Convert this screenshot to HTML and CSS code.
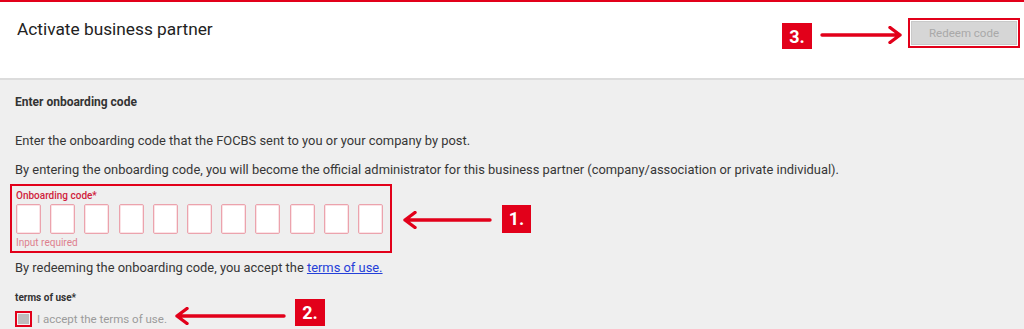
FILE: index.html
```html
<!DOCTYPE html>
<html lang="en">
<head>
    <meta charset="UTF-8">
    <title>Activate business partner</title>
    <link rel="stylesheet" href="styles.css">
</head>
<body>
    <div class="topline"></div>
    <header class="header">
        <h1>Activate business partner</h1>
        <div class="actions">
            <span class="badge badge-3">3.</span>
            <svg class="arrow arrow-right" width="83" height="18" viewBox="0 0 83 18">
                <path d="M2 9 H80 M70 1.5 L80 9 L70 16.5" fill="none" stroke="#e2001a" stroke-width="3.4" stroke-linecap="round" stroke-linejoin="round"/>
            </svg>
            <div class="mark btn-mark">
                <button class="redeem" disabled>Redeem code</button>
            </div>
        </div>
    </header>

    <main class="content">
        <h2>Enter onboarding code</h2>
        <p>Enter the onboarding code that the FOCBS sent to you or your company by post.</p>
        <p>By entering the onboarding code, you will become the official administrator for this business partner (company/association or private individual).</p>

        <div class="code-row">
            <div class="mark code-field">
                <label class="code-label">Onboarding code*</label>
                <div class="code-boxes">
                    <input class="code-box" maxlength="1">
                    <input class="code-box" maxlength="1">
                    <input class="code-box" maxlength="1">
                    <input class="code-box" maxlength="1">
                    <input class="code-box" maxlength="1">
                    <input class="code-box" maxlength="1">
                    <input class="code-box" maxlength="1">
                    <input class="code-box" maxlength="1">
                    <input class="code-box" maxlength="1">
                    <input class="code-box" maxlength="1">
                    <input class="code-box" maxlength="1">
                </div>
                <div class="code-error">Input required</div>
            </div>
            <svg class="arrow" width="90" height="18" viewBox="0 0 90 18">
                <path d="M88 9 H3 M13 1.5 L3 9 L13 16.5" fill="none" stroke="#e2001a" stroke-width="3.4" stroke-linecap="round" stroke-linejoin="round"/>
            </svg>
            <span class="badge badge-1">1.</span>
        </div>

        <p class="accept-text">By redeeming the onboarding code, you accept the <a href="#">terms of use.</a></p>

        <div class="terms-row">
            <div class="terms-col">
                <div class="terms-label">terms of use*</div>
                <label class="check-line">
                    <span class="checkbox"><span class="checkbox-inner"></span></span>
                    <span class="check-text">I accept the terms of use.</span>
                </label>
            </div>
            <svg class="arrow arrow-2" width="112" height="18" viewBox="0 0 112 18">
                <path d="M110 9 H3 M13 1.5 L3 9 L13 16.5" fill="none" stroke="#e2001a" stroke-width="3.4" stroke-linecap="round" stroke-linejoin="round"/>
            </svg>
            <span class="badge badge-2">2.</span>
        </div>
    </main>
</body>
</html>
```

FILE: styles.css
```css
body {
    margin: 0;
    background: #efefef;
    font-family: Roboto, "Liberation Sans", Arial, sans-serif;
    color: #363636;
    overflow: hidden;
}

.topline {
    height: 2px;
    background: #e2001a;
}

.header {
    height: 76px;
    background: #fff;
    border-bottom: 2px solid #dcdcdc;
    display: flex;
    justify-content: space-between;
    align-items: flex-start;
    padding: 0 4px 0 17px;
}

h1 {
    margin: 17px 0 0;
    font-size: 17.3px;
    line-height: 20px;
    font-weight: 400;
    color: #222;
}

.actions {
    display: flex;
    align-items: center;
    margin-top: 15px;
}

.badge {
    display: flex;
    align-items: center;
    justify-content: center;
    background: #e2001a;
    color: #fff;
    font-weight: 700;
    font-size: 18px;
    width: 30px;
    height: 26px;
}

.badge-3 {
    margin-top: 6px;
}

.arrow {
    display: block;
    flex: none;
}

.arrow-right {
    margin: 3px 5px 0 8px;
}

.mark {
    border: 2px solid #e2001a;
}

.btn-mark {
    width: 106px;
    height: 24px;
    padding: 1px;
}

.redeem {
    width: 100%;
    height: 100%;
    background: #d6d6d6;
    border: 1px solid #c9c9c9;
    color: #a9a9a9;
    font-family: Roboto, "Liberation Sans", Arial, sans-serif;
    font-size: 11.5px;
    padding: 0;
}

.content {
    padding: 0 15px;
}

h2 {
    margin: 14px 0 22px;
    font-size: 12px;
    line-height: 16px;
    font-weight: 700;
    color: #333;
}

p {
    margin: 0 0 11px;
    font-size: 12.9px;
    line-height: 18px;
}

.code-row {
    display: flex;
    align-items: center;
    margin: -6px 0 0 -5px;
}

.code-field {
    width: 374px;
    padding: 4px 0 2px 4px;
}

.code-label {
    display: block;
    font-size: 10px;
    line-height: 12px;
    font-weight: 500;
    color: #d0223c;
}

.code-boxes {
    display: flex;
    justify-content: space-between;
    width: 367px;
    margin: 2px 0 3px;
}

.code-box {
    width: 25px;
    height: 30px;
    box-sizing: border-box;
    border: 1px solid #eba3ad;
    border-radius: 2px;
    box-shadow: inset 0 0 0 1px #fbe3e6;
    background: #fff;
    padding: 0;
}

.code-error {
    font-size: 10px;
    line-height: 12px;
    color: #de7f8e;
}

.code-row .arrow {
    margin: 2px 10px 0 10px;
}

.badge-1 {
    width: 29px;
    height: 28px;
}

.accept-text {
    margin: 6px 0 0;
}

.accept-text a {
    color: #2440d8;
}

.terms-row {
    display: flex;
    align-items: flex-end;
    margin-top: 15px;
}

.terms-label {
    font-size: 10px;
    line-height: 12px;
    font-weight: 700;
    color: #333;
    margin-bottom: 7px;
}

.check-line {
    display: flex;
    align-items: center;
}

.checkbox {
    width: 17px;
    height: 16px;
    box-sizing: border-box;
    border: 2px solid #e2001a;
    padding: 1px;
    background: #f3f3f3;
}

.checkbox-inner {
    display: block;
    width: 100%;
    height: 100%;
    background: #bdbdbd;
}

.check-text {
    margin-left: 5px;
    font-size: 11.5px;
    color: #9b9b9b;
}

.arrow-2 {
    margin: 0 9px 2px 7px;
}

.badge-2 {
    width: 30px;
    height: 27px;
    margin-bottom: 1px;
}
```
